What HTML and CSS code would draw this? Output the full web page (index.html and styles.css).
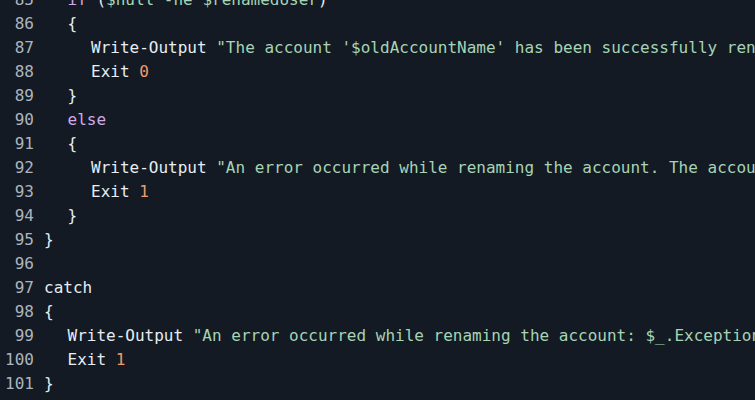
FILE: index.html
```html
<!DOCTYPE html>
<html>
<head>
<meta charset="utf-8">
<link rel="stylesheet" href="styles.css">
</head>
<body>
<div class="code">
  <div class="line"><span class="ln">85</span><span class="src i1"><span class="kw">if</span> (<span class="var">$null</span> <span class="var">-ne</span> <span class="var">$renamedUser</span>)</span></div>
  <div class="line"><span class="ln">86</span><span class="src i1">{</span></div>
  <div class="line"><span class="ln">87</span><span class="src i2">Write-Output <span class="str">"The account '$oldAccountName' has been successfully renamed to '$newAccountName'."</span></span></div>
  <div class="line"><span class="ln">88</span><span class="src i2">Exit <span class="num">0</span></span></div>
  <div class="line"><span class="ln">89</span><span class="src i1">}</span></div>
  <div class="line"><span class="ln">90</span><span class="src i1"><span class="kw">else</span></span></div>
  <div class="line"><span class="ln">91</span><span class="src i1">{</span></div>
  <div class="line"><span class="ln">92</span><span class="src i2">Write-Output <span class="str">"An error occurred while renaming the account. The account was not renamed."</span></span></div>
  <div class="line"><span class="ln">93</span><span class="src i2">Exit <span class="num">1</span></span></div>
  <div class="line"><span class="ln">94</span><span class="src i1">}</span></div>
  <div class="line"><span class="ln">95</span><span class="src">}</span></div>
  <div class="line"><span class="ln">96</span><span class="src"></span></div>
  <div class="line"><span class="ln">97</span><span class="src">catch</span></div>
  <div class="line"><span class="ln">98</span><span class="src">{</span></div>
  <div class="line"><span class="ln">99</span><span class="src i1">Write-Output <span class="str">"An error occurred while renaming the account: $_.Exception.Message"</span></span></div>
  <div class="line"><span class="ln">100</span><span class="src i1">Exit <span class="num">1</span></span></div>
  <div class="line"><span class="ln">101</span><span class="src">}</span></div>
</div>
</body>
</html>
```
FILE: styles.css
```css
html, body {
  margin: 0;
  padding: 0;
  background: #131a24;
  overflow: hidden;
}
.code {
  margin-top: -12px;
  font-family: "DejaVu Sans Mono", "Liberation Mono", monospace;
  font-size: 16px;
  line-height: 24px;
  color: #e6edf3;
}
.line {
  display: flex;
  white-space: pre;
  overflow: hidden;
}
.ln {
  flex: 0 0 34px;
  text-align: right;
  color: #adb4bc;
  margin-right: 10px;
}
.src {
  flex: 1 1 auto;
}
.i1 { padding-left: 23.5px; }
.i2 { padding-left: 47px; }
.kw { color: #d2a8e8; }
.str { color: #a6d4b4; }
.var { color: #a6d4b4; }
.num { color: #f09a6a; }
```
